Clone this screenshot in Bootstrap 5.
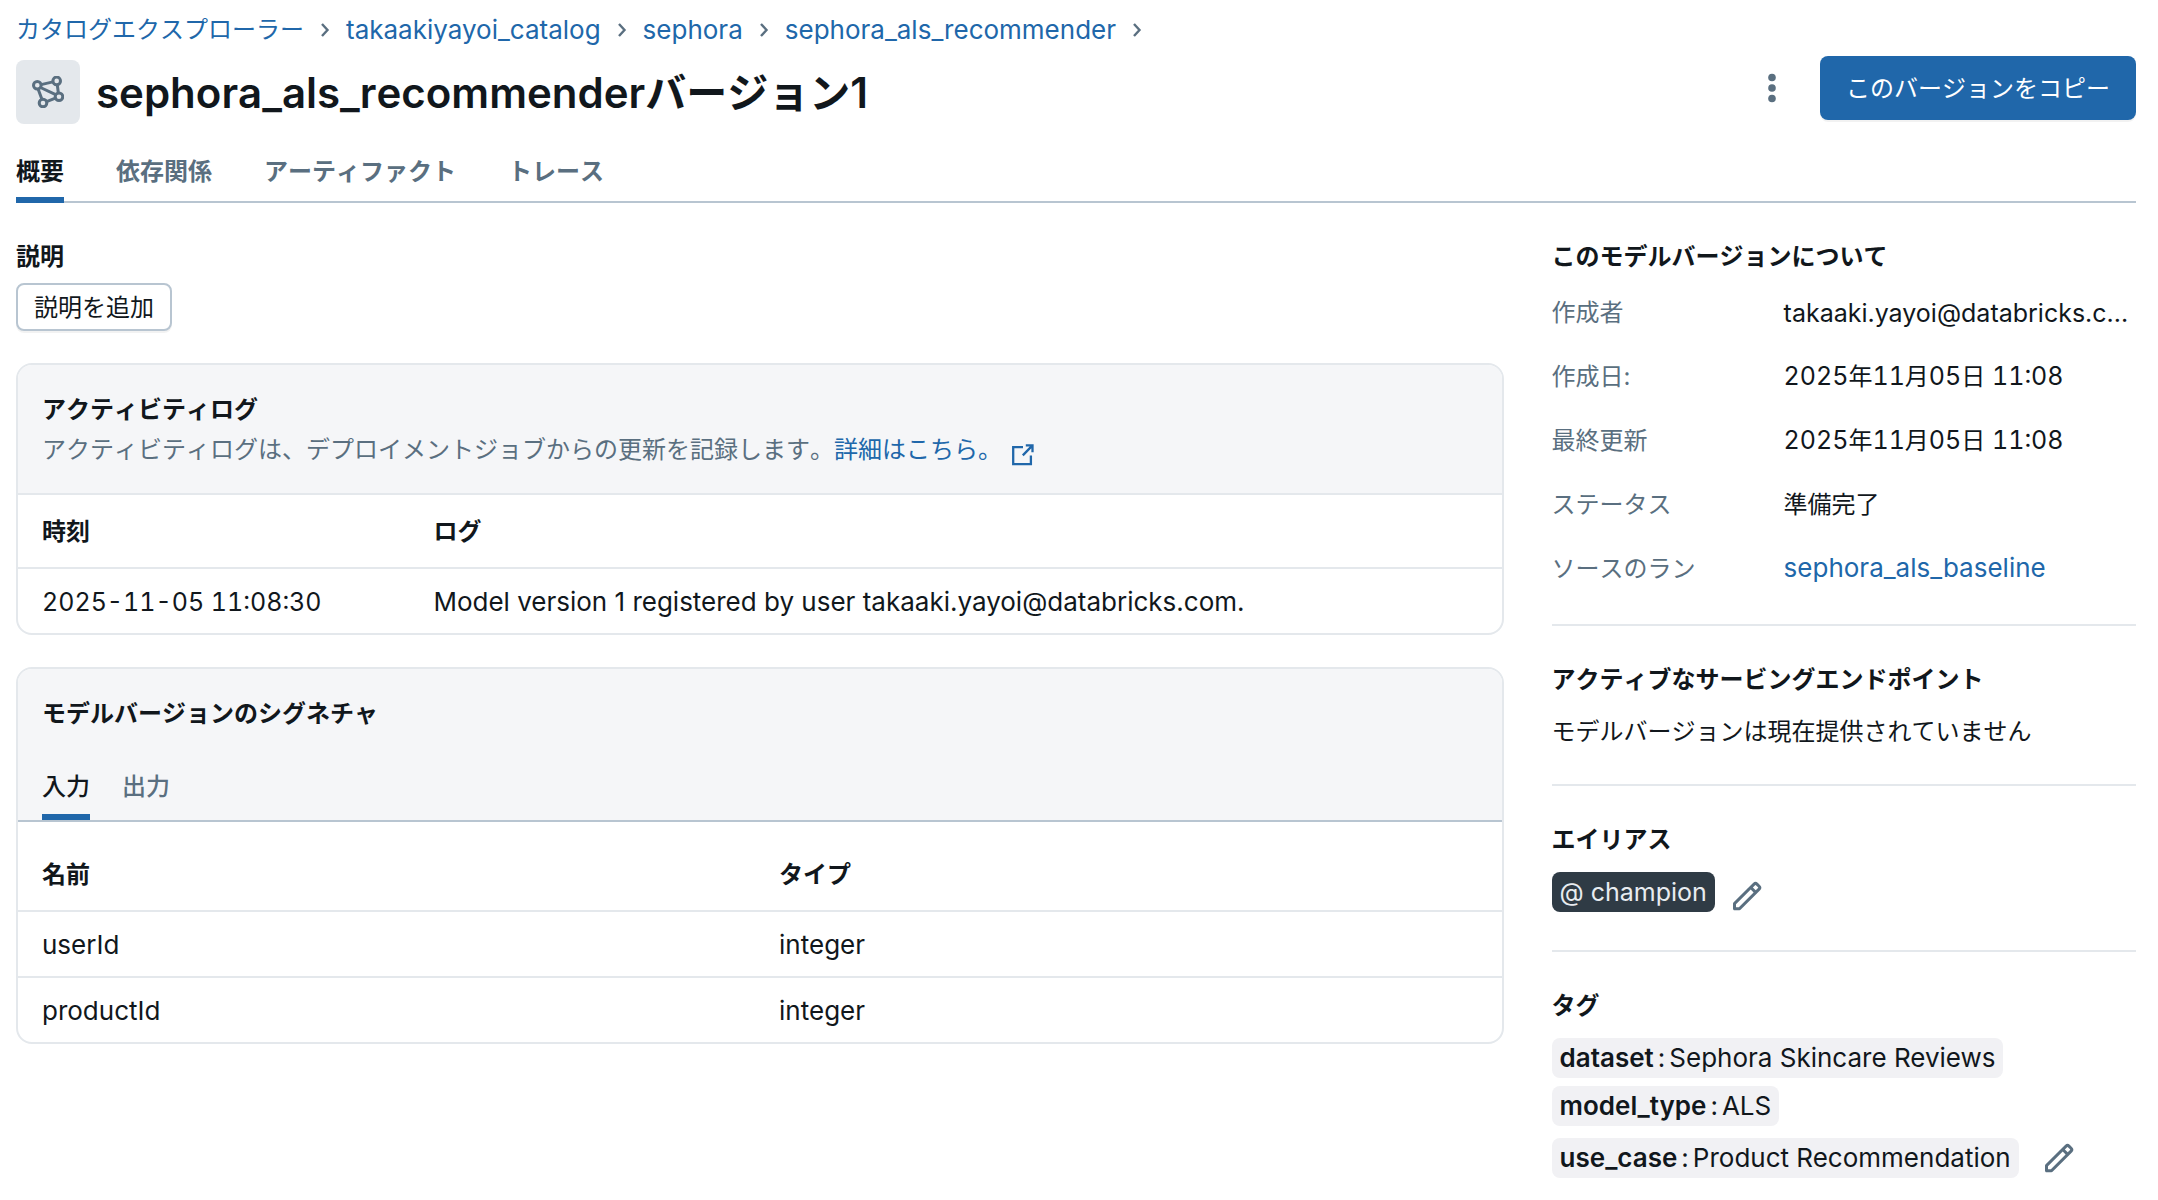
<!DOCTYPE html>
<html lang="ja">
<head>
<meta charset="utf-8">
<meta name="viewport" content="width=device-width, initial-scale=1">
<title>sephora_als_recommender バージョン1</title>
<link rel="stylesheet" href="https://cdn.jsdelivr.net/npm/bootstrap@5.3.0/dist/css/bootstrap.min.css">
<style>
:root{--ink:#11171c;--muted:#5a6f80;--blue:#2067aa;--line:#e4e8ec;--rule:#b8c5d1;--soft:#f5f6f8}
body{font-family:Inter,"Noto Sans CJK JP",sans-serif;font-size:24px;line-height:40px;font-kerning:none;color:var(--ink);background:#fff}
button{font-kerning:none}
a{color:var(--blue);text-decoration:none}
.latin{font-size:26px;font-kerning:normal}
.latin-sm{font-size:25px;font-kerning:normal}
.digits{font-size:25px;font-variant-numeric:tabular-nums}
.quiet{color:var(--muted)}
.page{padding:10px 22px 22px 16px}
.crumbs,.crumbs li{gap:13px}
.crumbs svg{color:var(--muted)}
.titlebar{padding-top:6px}
.model-icon{width:64px;height:64px;border-radius:8px;background:var(--line);color:var(--muted);margin-top:4px}
.page-title{font-size:41px;line-height:64px;font-weight:600;margin:5px 0 0}
.page-title span{font-size:42px;line-height:1}
.actions{gap:24px}
.dots{width:48px;height:64px;color:var(--muted)}
.copy-btn{background:var(--blue);color:#fff;padding:13px 26px 11px;border:0;border-radius:8px;box-shadow:0 2px 0 #0000000d}
.tabs{gap:52px;border-bottom:2px solid var(--rule)}
.tabs button{background:none;border:0;padding:0;color:var(--muted);font-weight:500}
.tabs button.active{color:var(--ink);box-shadow:inset 0 -6px 0 var(--blue)}
.main-tabs{margin-top:27px}
.main-tabs button{padding-bottom:11px;margin-bottom:-2px;font-weight:600}
.main-cols{display:grid;grid-template-columns:28fr 11fr;gap:48px;padding-top:34px}
.heading{font-size:24px;line-height:40px;font-weight:600;margin:0}
.add-btn{background:#fff;color:var(--ink);padding:3px 16px 1px;border:2px solid var(--rule);border-radius:8px;box-shadow:0 2px 0 #0000000d;margin-top:6px}
.panel{border:2px solid var(--line);border-radius:16px;overflow:hidden;margin-top:32px}
.panel-head{background:var(--soft);padding:25px 24px 23px}
.panel-head svg{vertical-align:-9px;margin-left:2px}
.grid-table{width:100%;table-layout:fixed;margin:0}
.grid-table th,.grid-table td{border-top:2px solid var(--line);padding:13px 0 11px;font-weight:400}
.grid-table th{font-weight:600;padding:17px 0 15px}
.grid-table th:first-child,.grid-table td:first-child{padding-left:24px}
.schema-table thead th{border-top:0;padding:33px 0 15px}
.sub-tabs{background:var(--soft);padding:10px 24px 0;gap:32px}
.sub-tabs button{padding-bottom:13px}
.facts{display:grid;grid-template-columns:232px 1fr;row-gap:24px;margin:16px 0 0;padding-bottom:3px}
.facts dt{font-weight:400;color:var(--muted)}
.facts dd{margin:0}
.facts dd span,.facts dd a{line-height:1}
.side-part{border-top:2px solid var(--line);padding-top:34px;margin-top:32px}
.side-body{margin-top:12px}
.alias-row{padding-bottom:6px}
.chip{display:inline-flex;gap:4px;height:40px;padding:0 8px;border-radius:8px;background:#f1f1f4}
.chip b{font-weight:600}
.chip-dark{background:#2f3b45;color:#e8ecf0}
.pencil{background:none;border:0;padding:0;color:var(--muted);line-height:0}
</style>
</head>
<body>
<div class="page">
<nav aria-label="パンくず">
<ol class="crumbs list-unstyled d-flex flex-wrap m-0">
<li class="d-flex align-items-center"><a href="#">カタログエクスプローラー</a><svg width="16" height="16" viewBox="0 0 16 16" fill="none" stroke="currentColor" stroke-width="2.4"><path d="M5 2l5.500 6L5 14"/></svg></li>
<li class="d-flex align-items-center"><a class="latin" href="#">takaakiyayoi_catalog</a><svg width="16" height="16" viewBox="0 0 16 16" fill="none" stroke="currentColor" stroke-width="2.4"><path d="M5 2l5.500 6L5 14"/></svg></li>
<li class="d-flex align-items-center"><a class="latin" href="#">sephora</a><svg width="16" height="16" viewBox="0 0 16 16" fill="none" stroke="currentColor" stroke-width="2.4"><path d="M5 2l5.500 6L5 14"/></svg></li>
<li class="d-flex align-items-center"><a class="latin" href="#">sephora_als_recommender</a><svg width="16" height="16" viewBox="0 0 16 16" fill="none" stroke="currentColor" stroke-width="2.4"><path d="M5 2l5.500 6L5 14"/></svg></li>
</ol>
</nav>
<header class="titlebar d-flex justify-content-between align-items-start">
<div class="d-flex gap-3">
<span class="model-icon d-flex align-items-center justify-content-center flex-shrink-0"><svg width="32" height="32" viewBox="0 0 32 32" fill="none" stroke="currentColor" stroke-width="3"><circle cx="5.300" cy="9.300" r="3.800"/><circle cx="24.700" cy="4.900" r="3.800"/><circle cx="27" cy="20.700" r="3.800"/><circle cx="11" cy="27" r="3.800"/><path d="M9 8.600l12-2.700M25.300 8.800l1 8M23.400 22.200l-8.800 3.400M6.200 13.200l3.700 10M8.500 11.500l15.200 7.200"/></svg></span>
<h1 class="page-title"><span>sephora_als_recommender</span>バージョン<span>1</span></h1>
</div>
<div class="actions d-flex">
<button class="dots btn p-0 border-0" type="button" aria-label="その他"><svg width="32" height="32" viewBox="0 0 32 32" fill="currentColor"><circle cx="16" cy="5.500" r="3.800"/><circle cx="16" cy="16" r="3.800"/><circle cx="16" cy="26.500" r="3.800"/></svg></button>
<button class="copy-btn" type="button">このバージョンをコピー</button>
</div>
</header>
<div class="tabs main-tabs d-flex" role="tablist">
<button class="active" type="button" role="tab" aria-selected="true">概要</button>
<button type="button" role="tab" aria-selected="false">依存関係</button>
<button type="button" role="tab" aria-selected="false">アーティファクト</button>
<button type="button" role="tab" aria-selected="false">トレース</button>
</div>
<div class="main-cols">
<main>
<h2 class="heading">説明</h2>
<button class="add-btn d-block" type="button">説明を追加</button>
<section class="panel">
<div class="panel-head">
<h2 class="heading">アクティビティログ</h2>
<div class="quiet">アクティビティログは、デプロイメントジョブからの更新を記録します。<a href="#">詳細はこちら。 <svg width="24" height="24" viewBox="0 0 24 24" fill="none" stroke="currentColor" stroke-width="2.3"><path d="M12 4.200H2.200V21.200H19.900V12.400"/><path d="M14.800 2.400H21.500V9.200M21.500 2.400L11.800 12.400"/></svg></a></div>
</div>
<table class="grid-table">
<colgroup><col style="width:28%"><col></colgroup>
<thead><tr><th scope="col">時刻</th><th scope="col">ログ</th></tr></thead>
<tbody><tr><td class="digits">2025-11-05 11:08:30</td><td class="latin">Model version 1 registered by user takaaki.yayoi@databricks.com.</td></tr></tbody>
</table>
</section>
<section class="panel">
<div class="panel-head"><h2 class="heading">モデルバージョンのシグネチャ</h2></div>
<div class="tabs sub-tabs d-flex" role="tablist">
<button class="active" type="button" role="tab" aria-selected="true">入力</button>
<button type="button" role="tab" aria-selected="false">出力</button>
</div>
<table class="grid-table schema-table">
<colgroup><col style="width:51.300%"><col></colgroup>
<thead><tr><th scope="col">名前</th><th scope="col">タイプ</th></tr></thead>
<tbody class="latin"><tr><td>userId</td><td>integer</td></tr><tr><td>productId</td><td>integer</td></tr></tbody>
</table>
</section>
</main>
<aside>
<section>
<h2 class="heading">このモデルバージョンについて</h2>
<dl class="facts">
<dt>作成者</dt><dd class="latin-sm">takaaki.yayoi@databricks.c...</dd>
<dt>作成日:</dt><dd><span class="digits">2025</span>年<span class="digits">11</span>月<span class="digits">05</span>日<span class="digits"> 11:08</span></dd>
<dt>最終更新</dt><dd><span class="digits">2025</span>年<span class="digits">11</span>月<span class="digits">05</span>日<span class="digits"> 11:08</span></dd>
<dt>ステータス</dt><dd>準備完了</dd>
<dt>ソースのラン</dt><dd><a class="latin" href="#">sephora_als_baseline</a></dd>
</dl>
</section>
<section class="side-part">
<h2 class="heading">アクティブなサービングエンドポイント</h2>
<p class="side-body mb-0">モデルバージョンは現在提供されていません</p>
</section>
<section class="side-part">
<h2 class="heading">エイリアス</h2>
<div class="side-body alias-row d-flex align-items-end gap-3"><span class="chip chip-dark latin-sm">@ champion</span><button class="pencil" type="button" aria-label="エイリアスを編集"><svg width="32" height="32" viewBox="0 0 16 16" fill="currentColor" fill-rule="evenodd"><path d="M13.487 1.513a1.750 1.750 0 0 0-2.474 0L1.220 11.306a.75.75 0 0 0-.22.53v2.500c0 .414.336.75.75.75h2.500a.75.75 0 0 0 .53-.22l9.793-9.793a1.750 1.750 0 0 0 0-2.475zm-1.414 1.060a.25.25 0 0 1 .354 0l1.086 1.086a.25.25 0 0 1 0 .354l-1.150 1.150L10.922 3.730zM9.862 4.789 2.500 12.150v1.435h1.437L11.301 6.220z"/></svg></button></div>
</section>
<section class="side-part">
<h2 class="heading">タグ</h2>
<div class="side-body latin d-flex flex-column align-items-start gap-2">
<span class="chip"><b>dataset</b><span>:</span><span>Sephora Skincare Reviews</span></span>
<span class="chip"><b>model_type</b><span>:</span><span>ALS</span></span>
<div class="d-flex align-items-center gap-4 mt-1"><span class="chip"><b>use_case</b><span>:</span><span>Product Recommendation</span></span><button class="pencil" type="button" aria-label="タグを編集"><svg width="32" height="32" viewBox="0 0 16 16" fill="currentColor" fill-rule="evenodd"><path d="M13.487 1.513a1.750 1.750 0 0 0-2.474 0L1.220 11.306a.75.75 0 0 0-.22.53v2.500c0 .414.336.75.75.75h2.500a.75.75 0 0 0 .53-.22l9.793-9.793a1.750 1.750 0 0 0 0-2.475zm-1.414 1.060a.25.25 0 0 1 .354 0l1.086 1.086a.25.25 0 0 1 0 .354l-1.150 1.150L10.922 3.730zM9.862 4.789 2.500 12.150v1.435h1.437L11.301 6.220z"/></svg></button></div>
</div>
</section>
</aside>
</div>
</div>
<script src="https://cdn.jsdelivr.net/npm/bootstrap@5.3.0/dist/js/bootstrap.bundle.min.js"></script>
</body>
</html>
